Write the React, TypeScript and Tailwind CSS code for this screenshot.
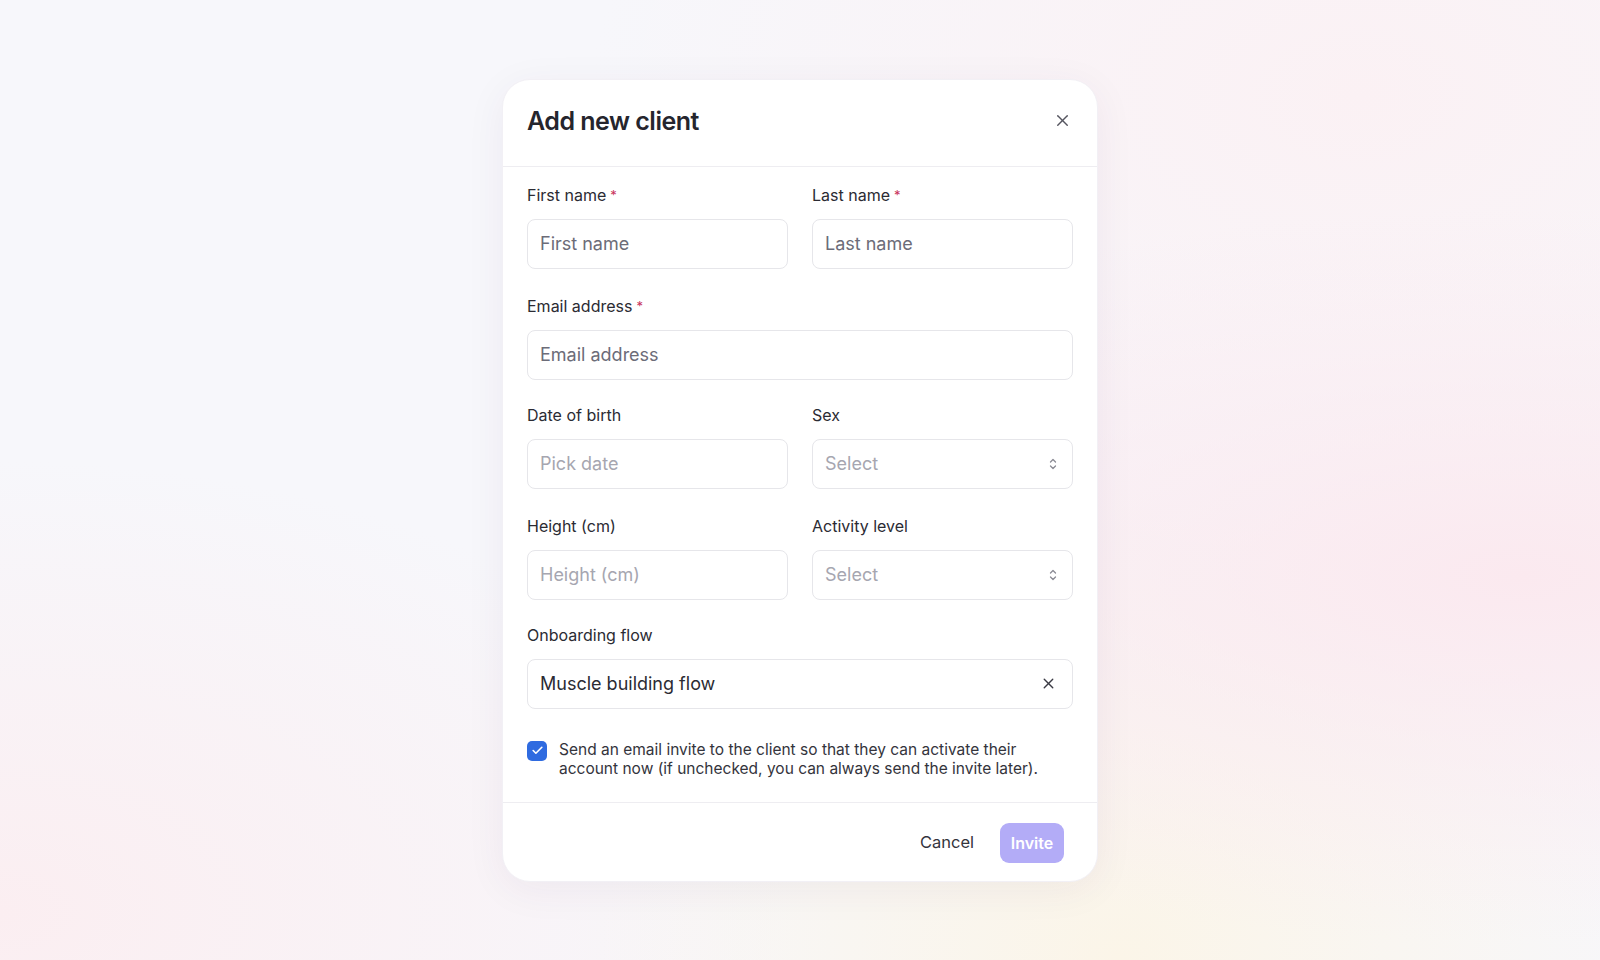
import { X, Check } from "lucide-react";

function Label({ text, required }: { text: string; required?: boolean }) {
  return (
    <label className="block text-[16px] leading-5 font-normal text-[#2b2b33] mb-[14px]">
      {text}
      {required && <span className="ml-1 text-[13px] text-[#c8315a] align-[1px]">*</span>}
    </label>
  );
}

function TextInput({ placeholder, light }: { placeholder: string; light?: boolean }) {
  return (
    <div className="h-[50px] rounded-lg border border-[#e6e6ea] bg-white flex items-center px-3">
      <span className={light ? "text-[18px] text-[#a6a6b0]" : "text-[18px] text-[#6c6c78]"}>
        {placeholder}
      </span>
    </div>
  );
}

function SelectBox() {
  return (
    <div className="h-[50px] rounded-lg border border-[#e6e6ea] bg-white flex items-center justify-between pl-3 pr-[14px]">
      <span className="text-[18px] text-[#a6a6b0]">Select</span>
      <svg width="10" height="14" viewBox="0 0 10 14" fill="none" stroke="#8a8a94" strokeWidth="1.3" strokeLinecap="round" strokeLinejoin="round">
        <path d="M2.5 5 L5 2.5 L7.5 5" />
        <path d="M2.5 9 L5 11.5 L7.5 9" />
      </svg>
    </div>
  );
}

export default function App() {
  return (
    <div
      className="min-h-screen w-full flex items-center justify-center bg-[#f7f7fb] bg-[radial-gradient(ellipse_at_95%_60%,#fbe9ef_0%,transparent_45%),radial-gradient(ellipse_at_70%_100%,#fbf5e8_0%,transparent_35%),radial-gradient(ellipse_at_0%_95%,#fbeef1_0%,transparent_35%),radial-gradient(ellipse_at_85%_10%,#fbf1f4_0%,transparent_40%)]"
      style={{ fontFamily: "Inter, 'Noto Sans', sans-serif" }}
    >
      <div className="w-[596px] bg-white rounded-[28px] shadow-[0_8px_40px_rgba(60,40,80,0.06)] border border-[#f2f0f5]">
        {/* Header */}
        <div className="flex items-center justify-between px-6 pt-[25px] pb-[29px] border-b border-[#eeedf1]">
          <h2 className="text-[25px] leading-8 font-semibold tracking-[-0.02em] text-[#25252d]">Add new client</h2>
          <X size={19} strokeWidth={1.8} className="text-[#55555f] mr-[1px]" />
        </div>

        {/* Body */}
        <div className="px-6 pt-[18px] pb-6">
          <div className="grid grid-cols-2 gap-x-6">
            <div>
              <Label text="First name" required />
              <TextInput placeholder="First name" />
            </div>
            <div>
              <Label text="Last name" required />
              <TextInput placeholder="Last name" />
            </div>
          </div>

          <div className="mt-[27px]">
            <Label text="Email address" required />
            <TextInput placeholder="Email address" />
          </div>

          <div className="grid grid-cols-2 gap-x-6 mt-[25px]">
            <div>
              <Label text="Date of birth" />
              <TextInput placeholder="Pick date" light />
            </div>
            <div>
              <Label text="Sex" />
              <SelectBox />
            </div>
          </div>

          <div className="grid grid-cols-2 gap-x-6 mt-[27px]">
            <div>
              <Label text="Height (cm)" />
              <TextInput placeholder="Height (cm)" light />
            </div>
            <div>
              <Label text="Activity level" />
              <SelectBox />
            </div>
          </div>

          <div className="mt-[25px]">
            <Label text="Onboarding flow" />
            <div className="h-[50px] rounded-lg border border-[#e6e6ea] bg-white flex items-center justify-between pl-3 pr-[15px]">
              <span className="text-[18px] text-[#2b2b33]">Muscle building flow</span>
              <X size={17} strokeWidth={1.9} className="text-[#3a3a44]" />
            </div>
          </div>

          <div className="flex items-start gap-3 mt-[31px]">
            <div className="w-5 h-5 mt-[1px] shrink-0 rounded-[5px] bg-[#2f6be0] flex items-center justify-center">
              <Check size={13} strokeWidth={3} className="text-white" />
            </div>
            <p className="text-[15.5px] leading-[19px] text-[#34343c]">
              Send an email invite to the client so that they can activate their
              <br />
              account now (if unchecked, you can always send the invite later).
            </p>
          </div>
        </div>

        {/* Footer */}
        <div className="flex items-center justify-end gap-[26px] pl-6 pr-[33px] pt-5 pb-[18px] border-t border-[#eeedf1]">
          <button className="text-[16.5px] text-[#34343c]">Cancel</button>
          <button className="h-10 w-16 rounded-[9px] bg-[#b3acf7] text-white text-[16px] font-semibold">Invite</button>
        </div>
      </div>
    </div>
  );
}
